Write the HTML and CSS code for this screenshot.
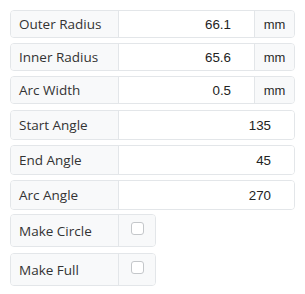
FILE: index.html
```html
<!DOCTYPE html>
<html lang="en">
<head>
  <meta charset="UTF-8">
  <meta name="viewport" content="width=device-width, initial-scale=1.0">
  <title>Arc Settings</title>
  <link rel="stylesheet" href="styles.css">
</head>
<body>
  <div class="arc-panel">
    <div class="field-row">
      <label class="field-label" for="outer-radius">Outer Radius</label>
      <input class="field-input" type="text" id="outer-radius" value="66.1">
      <span class="field-unit">mm</span>
    </div>
    <div class="field-row">
      <label class="field-label" for="inner-radius">Inner Radius</label>
      <input class="field-input" type="text" id="inner-radius" value="65.6">
      <span class="field-unit">mm</span>
    </div>
    <div class="field-row last-mm">
      <label class="field-label" for="arc-width">Arc Width</label>
      <input class="field-input" type="text" id="arc-width" value="0.5">
      <span class="field-unit">mm</span>
    </div>
    <div class="field-row tall">
      <label class="field-label" for="start-angle">Start Angle</label>
      <input class="field-input" type="text" id="start-angle" value="135">
    </div>
    <div class="field-row tall">
      <label class="field-label" for="end-angle">End Angle</label>
      <input class="field-input" type="text" id="end-angle" value="45">
    </div>
    <div class="field-row tall last-angle">
      <label class="field-label" for="arc-angle">Arc Angle</label>
      <input class="field-input" type="text" id="arc-angle" value="270">
    </div>
    <div class="field-row check-row">
      <label class="field-label" for="make-circle">Make Circle</label>
      <span class="check-cell"><input class="check-box" type="checkbox" id="make-circle"></span>
    </div>
    <div class="field-row check-row">
      <label class="field-label" for="make-full">Make Full</label>
      <span class="check-cell"><input class="check-box" type="checkbox" id="make-full"></span>
    </div>
  </div>
</body>
</html>
```

FILE: styles.css
```css
body {
  margin: 0;
  background-color: #ffffff;
  font-family: "Open Sans", Lato, Arial, sans-serif;
}

.arc-panel {
  padding: 10px;
  box-sizing: border-box;
  width: 305px;
}

.field-row {
  display: flex;
  height: 28px;
  margin-bottom: 5px;
  border: 1px solid #e3e6e9;
  border-radius: 4px;
  overflow: hidden;
  box-sizing: border-box;
}

.field-row.last-mm {
  margin-bottom: 6px;
}

.field-row.tall {
  height: 30px;
}

.field-row.last-angle {
  margin-bottom: 4px;
}

.field-label {
  display: flex;
  align-items: center;
  width: 108px;
  flex-shrink: 0;
  padding-left: 8px;
  box-sizing: border-box;
  background-color: #f8f9fa;
  border-right: 1px solid #e3e6e9;
  color: #333333;
  font-size: 13.5px;
}

.field-input {
  flex: 1;
  min-width: 0;
  border: none;
  padding: 0 23px 0 0;
  text-align: right;
  font-family: "Liberation Sans", Arial, sans-serif;
  font-size: 13.33px;
  color: #222222;
  background-color: #ffffff;
  outline: none;
}

.field-unit {
  display: flex;
  align-items: center;
  justify-content: center;
  width: 40px;
  box-sizing: border-box;
  background-color: #f8f9fa;
  border-left: 1px solid #e3e6e9;
  font-family: "Liberation Sans", Arial, sans-serif;
  font-size: 13px;
  color: #2b2b2b;
}

.check-row {
  width: 146px;
  height: 33px;
  margin-bottom: 6px;
}

.check-cell {
  flex: 1;
  background-color: #f8f9fa;
  display: flex;
  justify-content: center;
  padding-top: 7px;
  box-sizing: border-box;
}

.check-box {
  appearance: none;
  -webkit-appearance: none;
  width: 13px;
  height: 13px;
  margin: 0;
  border: 1px solid #c4c7ca;
  border-radius: 3px;
  background-color: #ffffff;
}
```
